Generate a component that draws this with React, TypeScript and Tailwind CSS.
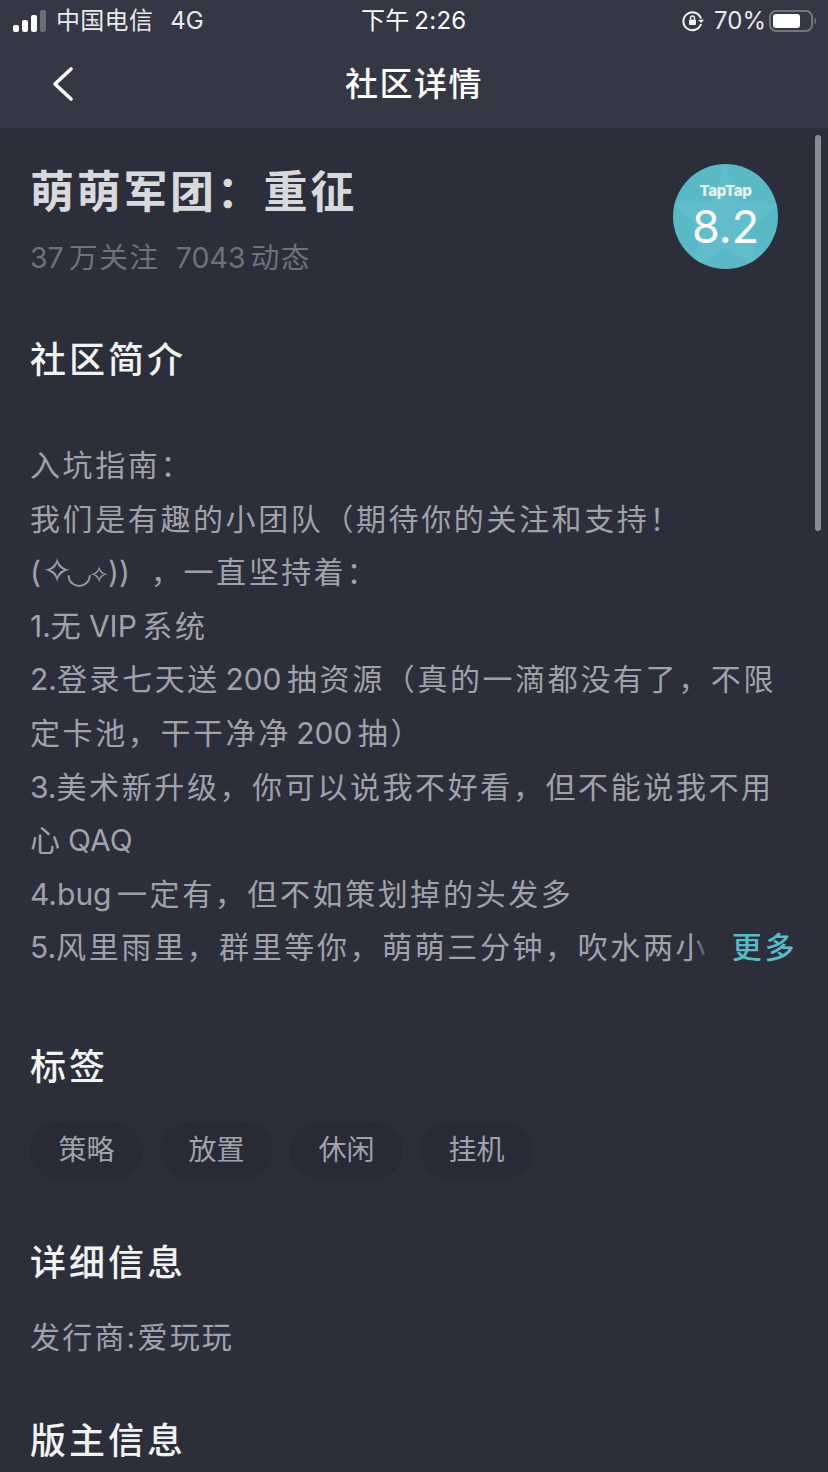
import React from "react";

const FONT = "font-['Inter','Noto_Sans_CJK_SC',sans-serif]";

// latin runs sit tighter than the cjk pitch in the reference
const Mixed = ({ text }: { text: string }) => (
  <>
    {text.split(/([\x20-\x7e\u2009]+)/).map((part, i) =>
      i % 2 === 1 ? (
        <span key={i} className="tracking-normal">{part}</span>
      ) : (
        <span key={i}>{part}</span>
      )
    )}
  </>
);

const lines = [
  "入坑指南：",
  "我们是有趣的小团队（期待你的关注和支持！",
  "KAOMOJI",
  "1.无\u2009VIP\u2009系统",
  "2.登录七天送\u2009200\u2009抽资源（真的一滴都没有了，不限",
  "定卡池，干干净净\u2009200\u2009抽）",
  "3.美术新升级，你可以说我不好看，但不能说我不用",
  "心\u2009QAQ",
  "4.bug\u2009一定有，但不如策划掉的头发多",
];

const tags = ["策略", "放置", "休闲", "挂机"];

const SectionTitle = ({ children, className = "" }: { children: React.ReactNode; className?: string }) => (
  <h2 className={`text-[36px] leading-[44px] tracking-[3px] font-medium text-[#f1f2f4] ${className}`}>{children}</h2>
);

const Kaomoji = () => (
  <div className="whitespace-nowrap">
    <span className="tracking-[1px]">(</span>
    <span className="text-[36px] tracking-[-6px] leading-none">✧</span>
    <span className="text-[30px] tracking-[-3px] leading-none">◡</span>
    <span className="text-[24px] tracking-[-1px] leading-none">✧</span>
    <span className="tracking-normal">))</span>
    <span className="ml-[21px]">，一直坚持着：</span>
  </div>
);

const StatusBar = () => (
  <div className="h-[42px] flex items-center justify-between pl-[13px] pr-[10px] text-[24px] text-[#e9eaed]">
    <div className="flex items-center">
      <svg width="34" height="24" viewBox="0 0 34 24" fill="currentColor">
        <rect x="0" y="16" width="6" height="7" rx="2" fill="#fff" />
        <rect x="9" y="11" width="6" height="12" rx="2" fill="#fff" />
        <rect x="18" y="6" width="6" height="17" rx="2" fill="#fff" />
        <rect x="27" y="1" width="6" height="22" rx="2" fill="#6b6e79" />
      </svg>
      <span className="ml-[9px] tracking-[0.300px]">中国电信</span>
      <span className="ml-[17px]">4G</span>
    </div>
    <span className="absolute left-[361px] text-white tracking-[0.300px]">下午{"\u2009"}2:26</span>
    <div className="flex items-center">
      <svg width="24" height="24" viewBox="0 0 24 24" fill="none" stroke="#f1f2f4" strokeWidth="2">
        <path d="M20 9.5A9 9 0 1 0 20 15" />
        <path d="M17 11l3.5 3 2.5-3.5" fill="#f1f2f4" stroke="none" />
        <rect x="8" y="10.5" width="7" height="5.5" rx="1" fill="#f1f2f4" stroke="none" />
        <path d="M9.5 10.5V9a2 2 0 0 1 4 0v1.5" strokeWidth="1.4" />
      </svg>
      <span className="ml-[9px]">70%</span>
      <svg className="ml-[3px]" width="49" height="24" viewBox="0 0 49 24">
        <rect x="1" y="2" width="42" height="20" rx="6" fill="none" stroke="#74767f" strokeWidth="2" />
        <rect x="4" y="5" width="27" height="14" rx="3" fill="#fff" />
        <path d="M45.500 9c2 .5 2.500 5.500 0 6z" fill="#74767f" />
      </svg>
    </div>
  </div>
);

const ScoreBadge = () => (
  <div className="relative w-[105px] h-[105px] rounded-full overflow-hidden bg-[#5ab9c7] flex flex-col items-center shrink-0">
    <svg className="absolute inset-0" viewBox="0 0 105 105">
      <path d="M52.500 0l15 38 37.500 2-29 26 10 39-33.500-21-33.500 21 10-39L0 40l37.500-2z" fill="#61bdca" />
    </svg>
    <span className="relative mt-[15px] text-[15px] leading-[24px] font-extrabold text-[#e8f6f8] tracking-[-0.300px]">TapTap</span>
    <span className="relative -mt-[1px] text-[45px] leading-[50px] text-white">8.2</span>
  </div>
);

export default function App() {
  return (
    <div className={`relative w-[828px] h-[1472px] overflow-hidden bg-[#2c2e3a] ${FONT}`}>
      <header className="relative h-[128px] bg-[#353844]">
        <StatusBar />
        <div className="relative h-[86px] flex items-center justify-center">
          <svg className="absolute left-[51px] top-[24px]" width="24" height="36" viewBox="0 0 24 36" fill="none" stroke="#fff" strokeWidth="3.600" strokeLinecap="round" strokeLinejoin="round">
            <path d="M20 3L4 18l16 15" />
          </svg>
          <h1 className="text-[33px] tracking-[1.500px] font-medium text-white">社区详情</h1>
        </div>
      </header>

      <main className="relative pl-[30px] pr-[31px]">
        <div className="flex justify-between pt-[36px] pr-[19px]">
          <div>
            <div className="text-[44px] leading-[56px] tracking-[2.700px] font-bold text-[#d8d9dd]">萌萌军团：重征</div>
            <div className="mt-[18px] text-[28.500px] leading-[40px] text-[#6f717c] tracking-[1.800px]">
              <Mixed text={"37\u2009万关注"} />
              <span className="ml-[16px]"><Mixed text={"7043\u2009动态"} /></span>
            </div>
          </div>
          <ScoreBadge />
        </div>

        <SectionTitle className="mt-[60px]">社区简介</SectionTitle>

        <div className="mt-[57px] text-[30px] leading-[53.6px] tracking-[2.600px] text-[#a0a2a9]">
          {lines.map((line) =>
            line === "KAOMOJI" ? (
              <Kaomoji key={line} />
            ) : (
              <div key={line} className="whitespace-nowrap"><Mixed text={line} /></div>
            )
          )}
          <div className="relative flex justify-between whitespace-nowrap">
            <span><Mixed text="5.风里雨里，群里等你，萌萌三分钟，吹水两小" /></span>
            <div className="absolute left-[662px] top-0 w-[20px] h-full bg-gradient-to-r from-transparent to-[#2c2e3a]" />
            <span className="text-[#57bcc9] font-medium">更多</span>
          </div>
        </div>

        <SectionTitle className="mt-[70px]">标签</SectionTitle>

        <div className="mt-[33px] flex gap-[17px]">
          {tags.map((tag) => (
            <span key={tag} className="w-[113px] h-[57px] rounded-full bg-[#282a35] flex items-center justify-center text-[28px] text-[#a0a2a9]">
              {tag}
            </span>
          ))}
        </div>

        <SectionTitle className="mt-[62px]">详细信息</SectionTitle>
        <div className="mt-[32px] text-[30px] leading-[40px] tracking-[2.200px] text-[#a0a2a9]">发行商:爱玩玩</div>
        <SectionTitle className="mt-[62px]">版主信息</SectionTitle>
      </main>

      <div className="absolute left-[815px] top-[135px] w-[6px] h-[396px] rounded-full bg-[#8a8c94]" />
    </div>
  );
}
